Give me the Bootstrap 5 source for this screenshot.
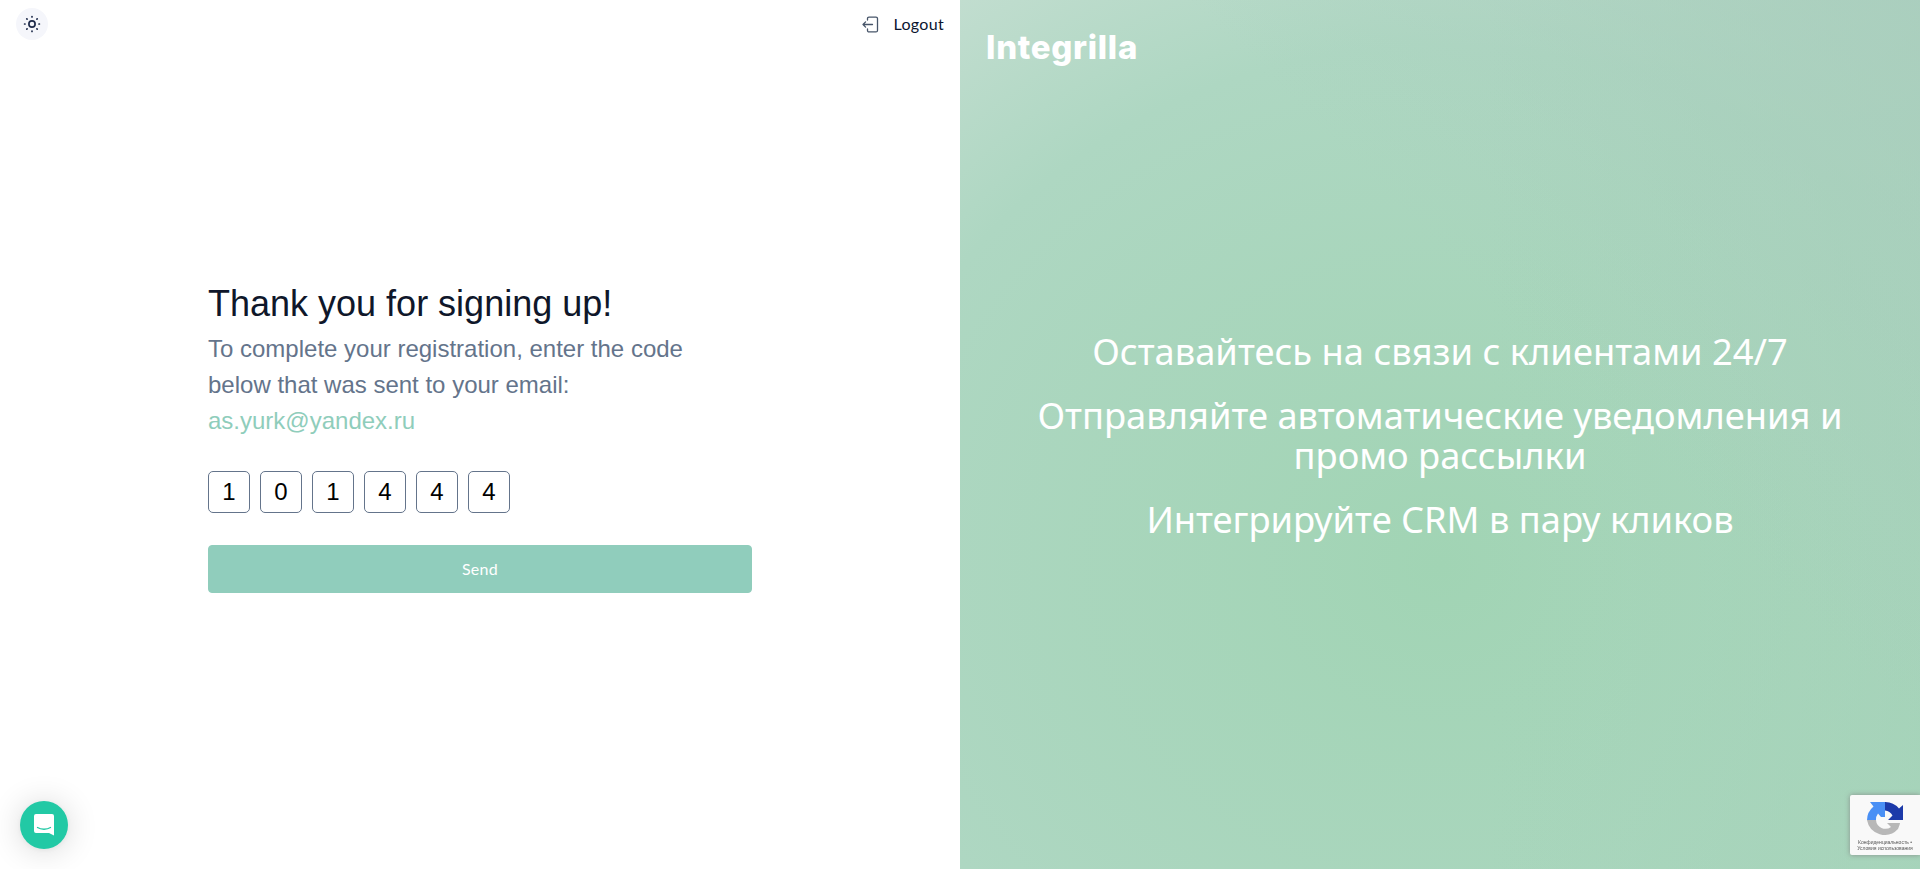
<!DOCTYPE html>
<html lang="en">
<head>
<meta charset="utf-8">
<title>Integrilla</title>
<link href="https://cdn.jsdelivr.net/npm/bootstrap@5.3.0/dist/css/bootstrap.min.css" rel="stylesheet">
<style>
html,body{height:100%;overflow:hidden}
body{font-family:"Liberation Sans",Arial,sans-serif;background:#fff}
.shell{height:869px}
.leftpane{height:869px;background:#fff}
.topbar{padding:8px 16px 0;height:48px}
.theme-toggle{width:32px;height:32px;border:0;border-radius:50%;background:#f5f6fb;padding:0}
.logout-link{font-family:"Lato","Noto Sans",sans-serif;font-size:16px;letter-spacing:.3px;color:#0b1530;text-decoration:none;gap:15px;margin-top:-8px;height:48px}
.signup-wrap{width:544px;margin:0 auto;padding-top:229px}
.signup-title{font-size:36px;line-height:54px;font-weight:400;color:#0f172a;margin:0}
.signup-text{font-size:24px;line-height:36px;color:#64748b;margin:0;width:490px}
.signup-mail{display:block;color:#8fcdbb}
.code-row{gap:10px;margin-top:32px}
.code-box{width:42px;height:42px;border:1px solid #64748b;border-radius:5px;text-align:center;font-size:24px;line-height:40px;color:#000}
.send-btn{height:48px;margin-top:32px;background:#90cdbc;border:1px solid #90cdbc;border-radius:4px;color:#fff;font-family:"Lato","Noto Sans",sans-serif;font-size:16px;letter-spacing:.3px}
.send-btn:hover{background:#90cdbc;border-color:#90cdbc;color:#fff}
.rightpane{height:869px;color:#fff;background:linear-gradient(225deg,rgba(170,205,190,.8),rgba(170,205,190,0) 40%),linear-gradient(270deg,rgba(163,210,183,.7),rgba(163,210,183,0) 45%),radial-gradient(ellipse 900px 800px at 50% 65%,#a1d4b4 0%,#aed7c2 65%,#c4ded1 92%)}
.brand-name{font-family:"Inter",sans-serif;font-weight:800;font-size:33px;line-height:48px;padding:23px 0 0 26px;letter-spacing:.7px}
.promo{height:752px;padding:0 40px}
.promo-line{font-family:"Noto Sans",sans-serif;font-size:36.3px;line-height:40px;margin:0 0 24px;text-align:center}
.chat-fab{position:fixed;left:20px;bottom:20px;width:48px;height:48px;border-radius:50%;background:#22c9a5;box-shadow:0 1px 6px rgba(0,0,0,.06),0 2px 32px rgba(0,0,0,.16)}
.captcha-badge{position:fixed;right:0;top:795px;width:70px;height:60px;background:#f9f9f9;border-radius:2px 0 0 2px;box-shadow:0 0 5px rgba(128,128,128,.8);font-size:5px;line-height:6px;color:#555;text-align:center;padding-top:7px;overflow:hidden;white-space:nowrap}
.captcha-badge svg{display:block;margin:0 auto 1px}
</style>
</head>
<body>
<div class="row g-0 shell">
  <div class="col-6 leftpane">
    <div class="topbar d-flex justify-content-between align-items-start">
      <button class="theme-toggle d-flex align-items-center justify-content-center" type="button" aria-label="Theme">
        <svg width="18" height="18" viewBox="0 0 18 18" fill="none" stroke="#1e2a4a" stroke-linecap="round"><circle cx="9" cy="9" r="3.100" stroke-width="1.700"/><g stroke-width="1.700"><path d="M9 1.600v.4M9 16v.4M1.600 9H2M16 9h.4M3.800 3.800l.3.3M13.900 13.900l.3.3M3.800 14.200l.3-.3M13.900 4.100l.3-.3"/></g></svg>
      </button>
      <a class="logout-link d-flex align-items-center" href="#">
        <svg width="17" height="17" viewBox="0 0 17 17" fill="none" stroke="#475569" stroke-width="1.300" stroke-linecap="round" stroke-linejoin="round"><path d="M5.500 4V2.600c0-.9.600-1.500 1.500-1.500h7c.9 0 1.500.6 1.500 1.500v11.800c0 .9-.6 1.500-1.500 1.500H7c-.9 0-1.500-.6-1.500-1.500V13"/><path d="M10.500 8.500H1M3.600 5.900 1 8.500l2.600 2.600"/></svg>
        <span>Logout</span>
      </a>
    </div>
    <div class="signup-wrap">
      <h1 class="signup-title">Thank you for signing up!</h1>
      <p class="signup-text">To complete your registration, enter the code below that was sent to your email: <span class="signup-mail">as.yurk@yandex.ru</span></p>
      <div class="d-flex code-row">
        <div class="code-box">1</div><div class="code-box">0</div><div class="code-box">1</div><div class="code-box">4</div><div class="code-box">4</div><div class="code-box">4</div>
      </div>
      <button class="btn send-btn w-100" type="button">Send</button>
    </div>
  </div>
  <div class="col-6 rightpane">
    <div class="brand-name">Integrilla</div>
    <div class="promo d-flex flex-column justify-content-center">
      <p class="promo-line">Оставайтесь на связи с клиентами 24/7</p>
      <p class="promo-line">Отправляйте автоматические уведомления и промо рассылки</p>
      <p class="promo-line">Интегрируйте CRM в пару кликов</p>
    </div>
  </div>
</div>
<div class="chat-fab d-flex align-items-center justify-content-center">
  <svg width="22" height="24" viewBox="0 0 22 24"><path fill="#fff" d="M3 1h16a2 2 0 0 1 2 2v19.500l-5-2.500H3a2 2 0 0 1-2-2V3a2 2 0 0 1 2-2z"/><path fill="none" stroke="#22c9a5" stroke-width="1.300" stroke-linecap="round" d="M4.500 14.500c3.500 2.300 9.500 2.300 13 0"/></svg>
</div>
<div class="captcha-badge">
  <svg width="36" height="36" viewBox="0 0 36 36"><path fill="#b8b8b8" d="M0 18H9A9.500 9.500 0 0 0 24 25L20 21H33Q33 22 31 27A18 18 0 0 1 0 18Z"/><path fill="#4a90f5" d="M0 18A18 18 0 0 1 6.500 4.500L3 0H18V15H14L11 11.500A9.500 9.500 0 0 0 9 18Z"/><path fill="#1c3aa9" d="M18 0A18 18 0 0 1 32 6.500L36 3V18H21L25.500 13.500A10 10 0 0 0 18 8.500Z"/></svg>
  <div>Конфиденциальность •</div>
  <div>Условия использования</div>
</div>
<script src="https://cdn.jsdelivr.net/npm/bootstrap@5.3.0/dist/js/bootstrap.bundle.min.js"></script>
</body>
</html>
